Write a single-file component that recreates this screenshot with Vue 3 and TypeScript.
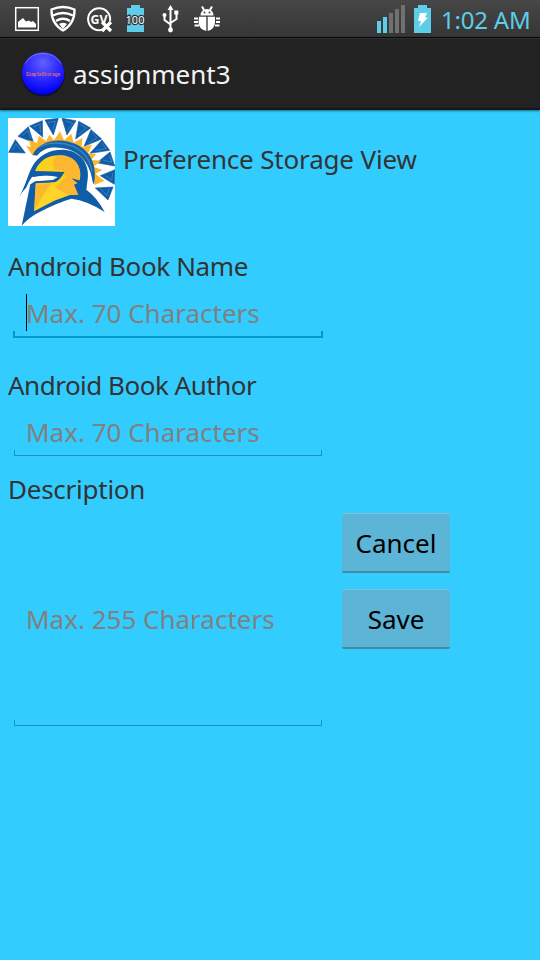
<script setup lang="ts">
interface Field {
  id: string
  label: string
  hint: string
  focused: boolean
}

const fields: Field[] = [
  { id: 'name', label: 'Android Book Name', hint: 'Max. 70 Characters', focused: true },
  { id: 'author', label: 'Android Book Author', hint: 'Max. 70 Characters', focused: false },
]

const signalBars = [12, 16, 20, 24, 28]

const feathers: string[] = [
  '2,103 22,65 52,105',
  '30,55 61,26 76,73',
  '65,24 103,8 104,57',
  '111,6 151,1 136,51',
  '162,1 204,8 177,51',
  '212,10 248,30 203,63',
  '249,35 281,63 228,85',
  '282,66 305,97 246,106',
  '306,102 320,144 267,134',
  '321,155 319,199 277,173',
  '315,207 300,246 262,210',
]
</script>

<template>
  <div class="screen">
    <header class="status">
      <div class="notices">
        <svg width="230" height="37" viewBox="0 0 230 37">
          <rect x="15.700" y="7.700" width="22.600" height="22.600" fill="none" stroke="#fff" stroke-width="1.500" />
          <path d="M18 27.500V22L23 18L26 21.500L29 20.500L31 22L33 21L36 24V27.500Z" fill="#fff" />
          <g fill="none" stroke="#fff" stroke-width="2.300">
            <path d="M51.500 9.500Q63 4.500 74.500 9.500Q75 23.500 63 30.500Q51 23.500 51.500 9.500Z" />
            <path d="M53 15.500Q63 10.500 73 15.500M56 21Q63 16.500 70 21" />
            <path d="M59 24Q63 21.500 67 24L63 29Z" fill="#fff" stroke="none" />
            <path d="M103 29.500A11 11 0 1 1 110 21" stroke-width="2" />
            <path d="M102 22L111 31M111 22L102 31" stroke-width="3.200" />
          </g>
          <text x="90.500" y="24" class="gv" textLength="17" lengthAdjust="spacingAndGlyphs">GV</text>
          <path d="M127 8H131V5H140V8H144V32H127Z" fill="#5dcde8" />
          <text x="125.500" y="24" class="charge" textLength="19">100</text>
          <g fill="none" stroke="#fff" stroke-width="2">
            <path d="M170.500 8V30M164.500 14.500V20L170.500 24.500M176.500 14V19L170.500 23" />
          </g>
          <path d="M170.500 5L173.500 10H167.500Z" fill="#fff" />
          <circle cx="164.500" cy="15" r="2" fill="#fff" />
          <rect x="174.300" y="10.500" width="4" height="4" fill="#fff" />
          <circle cx="170.500" cy="30" r="2.400" fill="#fff" />
          <g fill="#fff">
            <path d="M200.500 15.500Q201 9 207 9Q213 9 213.500 15.500ZM199 16.800H206.300V31Q198.500 29 198.500 22ZM207.700 16.800H215V22Q215 29 207.700 31Z" />
            <path d="M202 6.500L204 10M212 6.500L210 10M194 18.500H198M194 22H198M194.500 25.500H199M216 18.500H220M216 22H220M215 25.500H219.500" stroke="#fff" stroke-width="2" />
          </g>
          <circle cx="204.500" cy="12.500" r="1" fill="#444" />
          <circle cx="209.500" cy="12.500" r="1" fill="#444" />
        </svg>
      </div>
      <div class="system">
        <div class="signal">
          <i v-for="(h, i) in signalBars" :key="h" :class="{ on: i < 2 }" :style="{ height: h + 'px' }"></i>
        </div>
        <svg class="battery" width="17" height="28" viewBox="0 0 17 28">
          <path d="M0 3H4V0H13V3H17V28H0Z" fill="#5dcde8" />
          <path d="M6 8H13L11 12.500H14L5 22L7 16H4Z" fill="#fff" />
        </svg>
        <span class="clock">1:02 AM</span>
      </div>
    </header>

    <div class="actionbar">
      <svg class="appicon" width="46" height="48" viewBox="0 0 46 48">
        <defs>
          <radialGradient id="orb" cx=".5" cy=".25" r=".72">
            <stop offset="0" stop-color="#6360ff" />
            <stop offset=".55" stop-color="#2c28ff" />
            <stop offset="1" stop-color="#0000f4" />
          </radialGradient>
        </defs>
        <circle cx="22" cy="24.500" r="21.800" fill="#111" />
        <circle cx="22" cy="23.500" r="21.300" fill="url(#orb)" />
        <path d="M4 13.500Q10 3.500 22 3.500Q34 3.500 40 13.500" fill="none" stroke="#9391ff" stroke-width=".8" opacity=".75" />
        <text x="5" y="25.700" class="orbtext" textLength="34" lengthAdjust="spacingAndGlyphs">SimpleStorage</text>
      </svg>
      <h1>assignment3</h1>
    </div>

    <main>
      <div class="intro">
        <svg class="logo" width="107" height="108" viewBox="0 0 321 324" preserveAspectRatio="none">
          <rect width="321" height="324" fill="#fff" />
          <g fill="#0f5ca8" stroke="#0f5ca8" stroke-width="2" stroke-linejoin="round">
            <polygon v-for="p in feathers" :key="p" :points="p" />
          </g>
          <path fill="none" stroke="#6f9fcc" stroke-width="2.500" opacity=".6" d="M13 97L24 77L39 98M43 53L60 37L68 61M76 27L96 18L97 43M120 14L142 10L134 36M173 9L194 16L179 37M217 20L235 30L211 50M253 44L267 59L242 75M281 75L294 91L263 98M305 113L312 133L284 126M314 166L311 186L292 173M303 213L296 232L278 212" />
          <path fill="#fdb52c" d="M54 84L68 87L63 66L87 75L93 53L114 70L124 50L138 67L156 40L168 67L190 47L197 74L223 60L221 86L252 80L240 106L265 108L250 126L280 128L256 146L283 156L262 167L289 188L260 201L248 150L200 98L130 82L75 114Z" />
          <path fill="#1262ab" d="M74 110C91 78 126 63 170 69C238 79 271 132 258 199C252 193 253 178 247 162C232 119 205 98 166 91C130 84 106 90 87 113Z" />
          <path fill="none" stroke="#5792c3" stroke-width="4" opacity=".65" d="M91 89C120 69 165 73 196 85Q245 109 252 161" />
          <path fill="#0f5ca8" d="M33 237C51 207 57 177 71 149C92 109 131 92 174 96C222 102 248 145 238 191L235 215Q268 239 290 282Q239 248 190 242Q145 255 95 282Q63 298 41 323L67 199Q48 213 33 237Z" />
          <path fill="#fdd01e" d="M81 160C93 127 122 110 158 112C201 114 225 151 215 187L190 181L210 194L201 201L214 230L186 231L139 248L78 280L83 195L140 192Q159 181 169 162Z" />
          <path fill="#fbb036" opacity=".8" d="M134 128Q149 108 174 113Q210 122 216 158L214 187L190 181L210 194L201 201L214 230L186 231L154 219L142 207L174 177L161 156L139 155ZM83 202L130 196L102 235L79 276Z" />
          <path fill="#ffd52c" d="M130 202L178 230L139 244L80 276L105 235Z" />
          <path fill="#fff" d="M49 223Q59 195 72 177L89 173Q124 169 152 176L137 188L82 190L67 199Q55 207 49 223Z" />
          <path fill="#0f5ca8" d="M79 160L169 162Q158 184 143 192L82 196L85 190L134 186L150 177Q114 168 76 177ZM191 181L222 191L236 211L207 200L225 233L240 240L213 235L198 200L209 196Z" />
        </svg>
        <h2>Preference Storage View</h2>
      </div>

      <section v-for="f in fields" :key="f.id" class="field" :class="f.id">
        <label>{{ f.label }}</label>
        <div class="entry" :class="{ focused: f.focused }">
          <span>{{ f.hint }}</span>
        </div>
      </section>

      <section class="description">
        <label>Description</label>
        <div class="row">
          <div class="entry tall"><span>Max. 255 Characters</span></div>
          <div class="actions">
            <button type="button">Cancel</button>
            <button type="button">Save</button>
          </div>
        </div>
      </section>
    </main>
  </div>
</template>

<style>
body {
  margin: 0;
  background: #33ccff;
}
</style>

<style scoped>
* {
  box-sizing: border-box;
}
.screen {
  width: 540px;
  height: 960px;
  overflow: hidden;
  background: #33ccff;
  font: 26px/36px 'Noto Sans', 'Open Sans', sans-serif;
  color: #333;
}
.status {
  height: 38px;
  display: flex;
  justify-content: space-between;
  background: linear-gradient(#474747, #353535);
  border-bottom: 1px solid #000;
}
.notices svg,
.battery,
.appicon,
.logo {
  display: block;
  flex: none;
}
.system {
  display: flex;
  padding: 5px 10px 0 0;
}
.signal {
  display: flex;
  align-items: flex-end;
  height: 28px;
  gap: 2px;
  margin-right: 9px;
}
.signal i {
  width: 4px;
  background: #707070;
}
.signal i.on {
  background: #5dcde8;
}
.clock {
  margin-left: 10px;
  width: 89px;
  font-size: 24px;
  line-height: 29px;
  letter-spacing: -0.2px;
  white-space: nowrap;
  color: #5dcde8;
}
.gv {
  font: bold 12px 'Noto Sans', sans-serif;
  fill: #fff;
}
.charge {
  font: 11px 'Noto Sans', sans-serif;
  fill: #fff;
  stroke: #333;
  stroke-width: 2.5px;
  paint-order: stroke;
}
.orbtext {
  font: bold 4.500px 'Liberation Mono', monospace;
  fill: #e36d6b;
}
.actionbar {
  height: 72px;
  display: flex;
  align-items: center;
  padding-left: 21px;
  background: #222;
  border-top: 1px solid #303030;
  border-bottom: 2px solid #171717;
  box-shadow: 0 1px 2px #156a87;
}
h1,
h2 {
  margin: 0;
  font-weight: 400;
  font-size: 26px;
  white-space: nowrap;
}
h1 {
  margin-left: 6px;
  color: #f3f3f3;
}
main {
  padding: 8px 8px 0;
}
.intro {
  display: flex;
  height: 108px;
}
h2 {
  margin: 23px 0 0 8px;
  letter-spacing: -0.17px;
}
label {
  display: block;
  height: 36px;
  line-height: 34px;
  white-space: nowrap;
  letter-spacing: -0.38px;
}
.author label {
  letter-spacing: -0.5px;
}
.description label {
  letter-spacing: -0.25px;
}
.field {
  height: 104px;
}
.field.name {
  margin-top: 23px;
  height: 119px;
}
.entry {
  width: 308px;
  height: 52px;
  margin-left: 6px;
  padding: 10px 0 0 12px;
  color: #808080;
  white-space: nowrap;
  background:
    linear-gradient(#1a94bf, #1a94bf) left bottom / 1px 6px no-repeat,
    linear-gradient(#1a94bf, #1a94bf) right bottom / 1px 6px no-repeat,
    linear-gradient(#1a94bf, #1a94bf) left bottom / 100% 1px no-repeat;
}
.entry.focused {
  width: 310px;
  height: 53px;
  margin-left: 5px;
  padding-left: 13px;
  background:
    linear-gradient(#0099cc, #0099cc) left bottom / 2px 7px no-repeat,
    linear-gradient(#0099cc, #0099cc) right bottom / 2px 7px no-repeat,
    linear-gradient(#0099cc, #0099cc) left bottom / 100% 2px no-repeat,
    linear-gradient(#000, #000) 13px 9px / 1px 37px no-repeat;
}
.row {
  display: flex;
  gap: 20px;
}
.entry.tall {
  height: 218px;
  padding-top: 93px;
}
.actions {
  display: flex;
  flex-direction: column;
  gap: 16px;
  padding-top: 5px;
}
button {
  width: 108px;
  height: 60px;
  padding: 0;
  border: 0;
  border-top: 1px solid #7bc5df;
  border-bottom: 2px solid #438aa3;
  border-radius: 2px;
  background: #5cb4d6;
  color: #000;
  font: inherit;
}
</style>
